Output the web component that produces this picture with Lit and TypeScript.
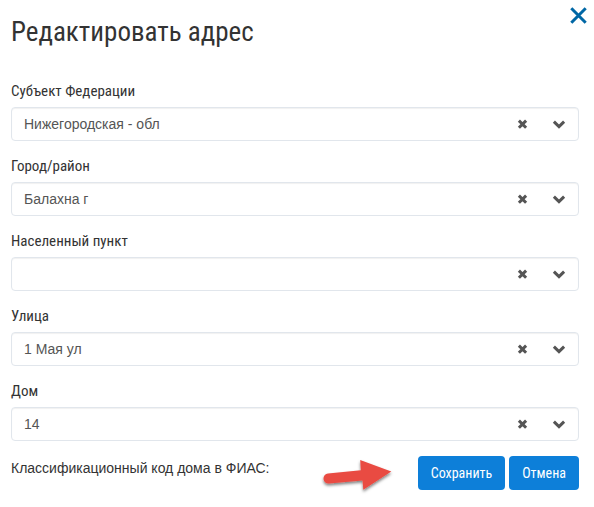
import { LitElement, html, css } from "lit";
import { customElement, property, state } from "lit/decorators.js";

const narrow = css`"Roboto Condensed", "Liberation Sans Narrow", Roboto, sans-serif`;

@customElement("address-field")
class AddressField extends LitElement {
  @property() label = "";
  @property() value = "";

  static styles = css`
    :host {
      display: block;
    }
    .label {
      display: block;
      margin-bottom: 6px;
      font: 15px/20px ${narrow};
      color: #333;
    }
    .box {
      display: flex;
      align-items: center;
      box-sizing: border-box;
      height: 34px;
      padding-right: 8px;
      border: 1px solid #e1e6ec;
      border-radius: 4px;
      background: #fff;
      box-shadow: inset 0 1px 1px rgba(0, 0, 0, 0.06);
    }
    .input {
      flex: 1;
      min-width: 0;
      padding: 0 12px;
      border: 0;
      outline: 0;
      background: none;
      font: 14px/20px "Liberation Sans", Arial, sans-serif;
      color: #555;
    }
    .tool {
      display: flex;
      align-items: center;
      justify-content: center;
      width: 22px;
      height: 22px;
      padding: 0;
      border: 0;
      background: none;
      color: #555;
      cursor: pointer;
    }
    .clear {
      margin-right: 15px;
    }
  `;

  render() {
    return html`
      <label class="label" for="input">${this.label}</label>
      <div class="box">
        <input
          class="input"
          id="input"
          type="text"
          role="combobox"
          aria-expanded="false"
          autocomplete="off"
          .value=${this.value}
          @input=${(e: Event) => (this.value = (e.target as HTMLInputElement).value)}
        />
        <button class="tool clear" type="button" aria-label="Очистить" @click=${() => (this.value = "")}>
          <svg width="12" height="10" viewBox="0 0 12 10" fill="none" stroke="currentColor" stroke-width="3">
            <path d="M2.9 1.6 10.1 8.8M10.1 1.6 2.9 8.8" />
          </svg>
        </button>
        <button class="tool" type="button" aria-label="Открыть список">
          <svg width="14" height="10" viewBox="0 0 14 10" fill="none" stroke="currentColor" stroke-width="3">
            <path d="M1.9 2.6 7 7.6 12.1 2.6" />
          </svg>
        </button>
      </div>
    `;
  }
}

@customElement("app-root")
class AppRoot extends LitElement {
  @state() private fields = [
    { label: "Субъект Федерации", value: "Нижегородская - обл" },
    { label: "Город/район", value: "Балахна г" },
    { label: "Населенный пункт", value: "" },
    { label: "Улица", value: "1 Мая ул" },
    { label: "Дом", value: "14" },
  ];

  static styles = css`
    :host {
      display: block;
      background: #fff;
      color: #333;
    }
    .dialog {
      padding: 6px 15px 16px 11px;
    }
    .header {
      display: flex;
      justify-content: space-between;
      align-items: flex-start;
      margin: 0 -9px 29px 0;
    }
    .title {
      margin: 6px 0 0;
      font: 27px/40px ${narrow};
    }
    .close {
      display: flex;
      padding: 0;
      border: 0;
      background: none;
      color: #0067a5;
      cursor: pointer;
    }
    .fields {
      display: flex;
      flex-direction: column;
      gap: 15px;
    }
    .footer {
      display: flex;
      align-items: flex-start;
      margin-top: 15px;
    }
    .code {
      margin: 2px auto 0 0;
      font: 14px/20px "Liberation Sans", Arial, sans-serif;
    }
    .arrow {
      flex: none;
      margin-right: 22px;
    }
    .actions {
      display: flex;
      gap: 4px;
    }
    .button {
      height: 34px;
      padding: 0 13px;
      border: 0;
      border-radius: 4px;
      background: #0d7fd9;
      color: #fff;
      font: 14px/20px ${narrow};
      cursor: pointer;
    }
  `;

  render() {
    return html`
      <form class="dialog" @submit=${(e: Event) => e.preventDefault()}>
        <div class="header">
          <h1 class="title">Редактировать адрес</h1>
          <button class="close" type="button" aria-label="Закрыть">
            <svg width="20" height="20" viewBox="0 0 20 20" fill="none" stroke="currentColor" stroke-width="3">
              <path d="M3.3 2.3 17.7 16.7M17.7 2.3 3.3 16.7" />
            </svg>
          </button>
        </div>
        <div class="fields">
          ${this.fields.map((f) => html`<address-field .label=${f.label} .value=${f.value}></address-field>`)}
        </div>
        <div class="footer">
          <p class="code">Классификационный код дома в ФИАС:</p>
          <svg class="arrow" width="76" height="40" viewBox="0 0 76 40" aria-hidden="true">
            <defs>
              <filter id="shade" x="-20%" y="-20%" width="140%" height="150%">
                <feDropShadow dx="0" dy="2" stdDeviation="1.5" flood-color="#000" flood-opacity="0.5" />
              </filter>
            </defs>
            <path
              d="M8 17.5 40.8 14.3 40.2 4 71.3 15.5 43.3 33.8 42.5 24.6 9 27.5A5 5 0 0 1 8 17.5Z"
              fill="#e94b43"
              filter="url(#shade)"
            />
          </svg>
          <div class="actions">
            <button class="button" type="submit">Сохранить</button>
            <button class="button" type="button">Отмена</button>
          </div>
        </div>
      </form>
    `;
  }
}
